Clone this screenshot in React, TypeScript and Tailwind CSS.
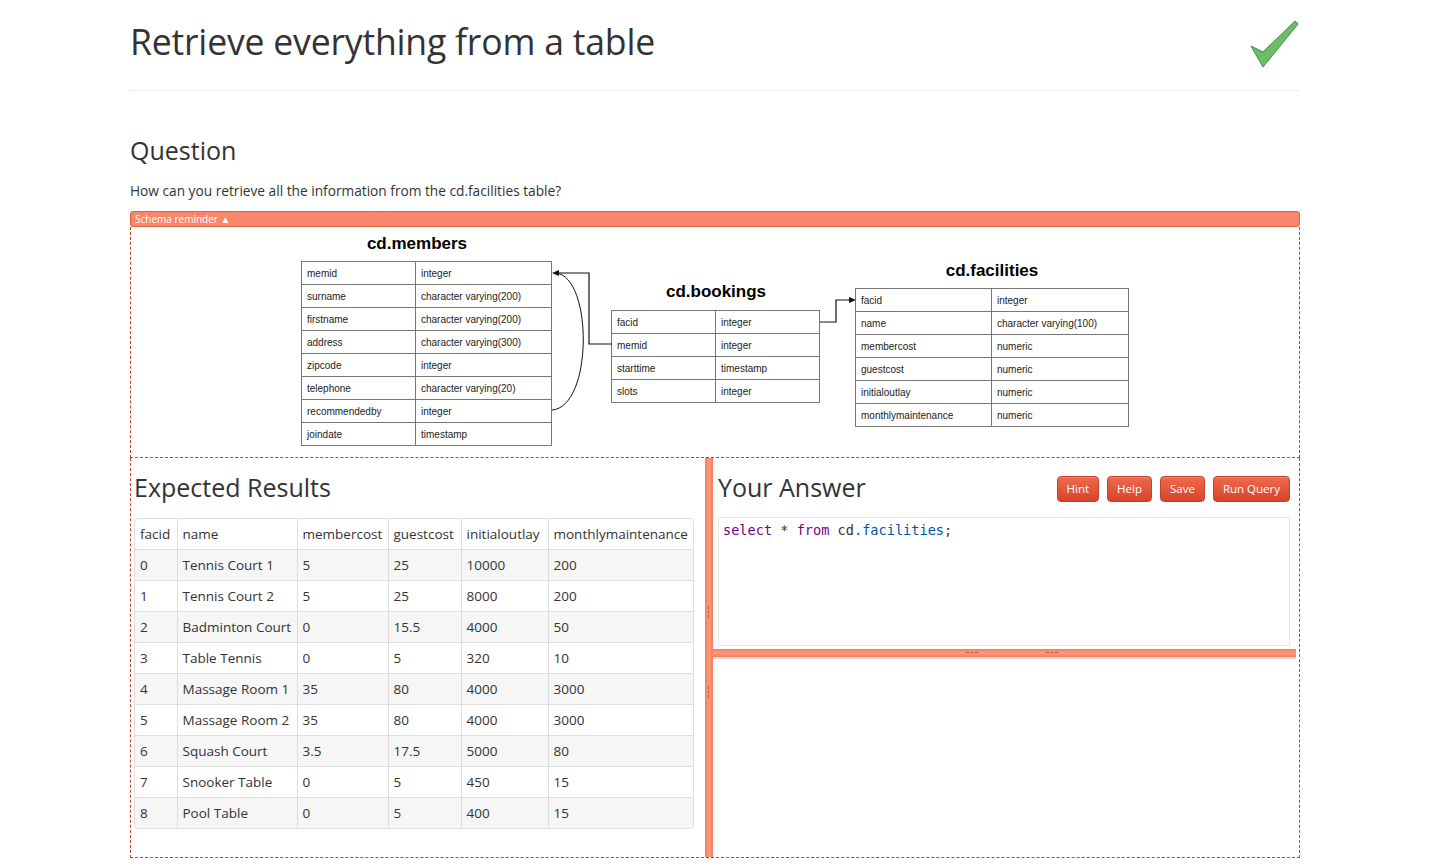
import React from "react";

const members: [string, string][] = [
  ["memid", "integer"],
  ["surname", "character varying(200)"],
  ["firstname", "character varying(200)"],
  ["address", "character varying(300)"],
  ["zipcode", "integer"],
  ["telephone", "character varying(20)"],
  ["recommendedby", "integer"],
  ["joindate", "timestamp"],
];
const bookings: [string, string][] = [
  ["facid", "integer"],
  ["memid", "integer"],
  ["starttime", "timestamp"],
  ["slots", "integer"],
];
const facilities: [string, string][] = [
  ["facid", "integer"],
  ["name", "character varying(100)"],
  ["membercost", "numeric"],
  ["guestcost", "numeric"],
  ["initialoutlay", "numeric"],
  ["monthlymaintenance", "numeric"],
];

const results: string[][] = [
  ["0", "Tennis Court 1", "5", "25", "10000", "200"],
  ["1", "Tennis Court 2", "5", "25", "8000", "200"],
  ["2", "Badminton Court", "0", "15.5", "4000", "50"],
  ["3", "Table Tennis", "0", "5", "320", "10"],
  ["4", "Massage Room 1", "35", "80", "4000", "3000"],
  ["5", "Massage Room 2", "35", "80", "4000", "3000"],
  ["6", "Squash Court", "3.5", "17.5", "5000", "80"],
  ["7", "Snooker Table", "0", "5", "450", "15"],
  ["8", "Pool Table", "0", "5", "400", "15"],
];
const headers = ["facid", "name", "membercost", "guestcost", "initialoutlay", "monthlymaintenance"];
const colW = ["w-[42px]", "w-[120px]", "w-[91px]", "w-[73px]", "w-[87px]", "w-[146px]"];

const arial = { fontFamily: '"Liberation Sans", Arial, sans-serif' };

function SchemaTable({ rows, c1, c2 }: { rows: [string, string][]; c1: string; c2: string }) {
  return (
    <table className="border-collapse text-[10px] text-[#222]" style={arial}>
      <tbody>
        {rows.map(([a, b]) => (
          <tr key={a} className="h-[23px]">
            <td className={`${c1} border border-[#777] pl-[5px] align-middle`}>{a}</td>
            <td className={`${c2} border border-[#777] pl-[5px] align-middle`}>{b}</td>
          </tr>
        ))}
      </tbody>
    </table>
  );
}

export default function App() {
  const sans = { fontFamily: '"Open Sans", "Noto Sans", sans-serif' };
  return (
    <div className="min-h-[867px] bg-white text-[#333]" style={sans}>
      <div className="ml-[130px] w-[1170px]">
        {/* Title */}
        <div className="flex h-[91px] items-center justify-between border-b border-[#eee] pb-[8px]">
          <h1 className="text-[35.6px] leading-[40px] tracking-[-0.2px] text-[#333]">Retrieve everything from a table</h1>
          <svg width="52" height="52" viewBox="0 0 52 52" className="mr-[-1px] mt-[9px]">
            <polygon points="2,26 14,32 46,1 49,4 14,47" fill="#6cbd65" stroke="#3f8f3f" strokeWidth="1" strokeLinejoin="round" />
          </svg>
        </div>

        {/* Question */}
        <h2 className="mt-[44px] text-[25px] leading-[30px]">Question</h2>
        <p className="mt-[16px] text-[13.7px] leading-[20px]">How can you retrieve all the information from the cd.facilities table?</p>

        <div className="mt-[10px] h-[16px] rounded-[3px] border border-[#e5603c] bg-[#f7876a] px-[4px] text-[10px] leading-[14px] text-white">
          Schema reminder ▲
        </div>

        {/* Schema diagram */}
        <div className="relative h-[231px] border-x border-b border-dashed border-[#c23f30]">
          <div className="absolute left-[186px] top-[4px] w-[200px] text-center text-[17px] font-bold text-black" style={arial}>cd.members</div>
          <div className="absolute left-[170px] top-[34px]">
            <SchemaTable rows={members} c1="w-[114px]" c2="w-[136px]" />
          </div>
          <div className="absolute left-[485px] top-[52px] w-[200px] text-center text-[17px] font-bold text-black" style={arial}>cd.bookings</div>
          <div className="absolute left-[480px] top-[83px]">
            <SchemaTable rows={bookings} c1="w-[104px]" c2="w-[104px]" />
          </div>
          <div className="absolute left-[761px] top-[31px] w-[200px] text-center text-[17px] font-bold text-black" style={arial}>cd.facilities</div>
          <div className="absolute left-[724px] top-[61px]">
            <SchemaTable rows={facilities} c1="w-[136px]" c2="w-[137px]" />
          </div>
          <svg className="pointer-events-none absolute left-0 top-0" width="1170" height="231">
            <polyline points="689,95 705,95 705,73 720,73" fill="none" stroke="#111" strokeWidth="1.2" />
            <polygon points="725,73 718,70 718,76" fill="#111" />
            <polyline points="481,117 458,117 458,46 426,46" fill="none" stroke="#111" strokeWidth="1.2" />
            <polygon points="421,46 428,43 428,49" fill="#111" />
            <path d="M421,183 C462,180 462,50 425,46" fill="none" stroke="#111" strokeWidth="1" />
          </svg>
        </div>

        {/* Lower area */}
        <div className="flex h-[400px] border-x border-b border-dashed border-[#c23f30]">
          {/* Left panel */}
          <div className="w-[574px] pl-[3px]">
            <h3 className="mt-[14px] text-[25px] leading-[30px]">Expected Results</h3>
            <div className="mt-[16px] w-[560px] overflow-hidden rounded-[4px] border border-[#ddd]">
              <table className="w-full table-fixed border-collapse whitespace-nowrap text-[13.5px] leading-[20px]">
                <thead>
                  <tr>
                    {headers.map((h, i) => (
                      <th key={h} className={`${colW[i]} border-l border-[#ddd] px-[5px] py-[5px] text-left font-normal first:border-l-0`}>{h}</th>
                    ))}
                  </tr>
                </thead>
                <tbody>
                  {results.map((r, ri) => (
                    <tr key={ri} className={ri % 2 === 0 ? "bg-[#f6f6f6]" : "bg-white"}>
                      {r.map((c, ci) => (
                        <td key={ci} className="border-l border-t border-[#ddd] px-[5px] py-[5px] first:border-l-0">{c}</td>
                      ))}
                    </tr>
                  ))}
                </tbody>
              </table>
            </div>
          </div>

          {/* Vertical splitter */}
          <div className="relative w-[8px] bg-gradient-to-r from-[#f47e5c] via-[#ff9a7c] to-[#f47e5c]">
            <div className="absolute left-[3px] top-[148px] h-[12px] border-l border-dashed border-[#c9553a]" />
            <div className="absolute left-[3px] top-[228px] h-[12px] border-l border-dashed border-[#c9553a]" />
          </div>

          {/* Right panel */}
          <div className="flex flex-1 flex-col">
            <div className="px-[5px]">
              <div className="mt-[14px] flex items-start justify-between pr-[4px]">
                <h3 className="text-[25px] leading-[30px]">Your Answer</h3>
                <div className="mt-[4px] flex gap-[8px]">
                  {["Hint", "Help", "Save", "Run Query"].map((b) => (
                    <button key={b} className="h-[26px] rounded-[4px] border border-[#c5402a] bg-gradient-to-b from-[#ee6a4d] to-[#d6432b] px-[9px] text-[11.5px] font-medium text-white shadow-[inset_0_1px_0_rgba(255,255,255,0.2)]">{b}</button>
                  ))}
                </div>
              </div>
              <div className="mr-[4px] mt-[15px] h-[129px] border border-[#e6e6e6] px-[4px] py-[3px] text-[13.6px] leading-[18px]" style={{ fontFamily: '"DejaVu Sans Mono", "Liberation Mono", monospace' }}>
                <span className="text-[#770088]">select</span> * <span className="text-[#770088]">from</span> cd<span className="text-[#0055aa]">.facilities</span>;
              </div>
            </div>
            <div className="relative mr-[3px] mt-[3px] h-[8px] bg-gradient-to-b from-[#f47e5c] via-[#ff9a7c] to-[#f47e5c]">
              <div className="absolute left-[253px] top-[3px] w-[12px] border-t border-dashed border-[#c9553a]" />
              <div className="absolute left-[333px] top-[3px] w-[12px] border-t border-dashed border-[#c9553a]" />
            </div>
            <div className="mr-[3px] h-[2px] bg-[#ddd]" />
          </div>
        </div>
      </div>
    </div>
  );
}
